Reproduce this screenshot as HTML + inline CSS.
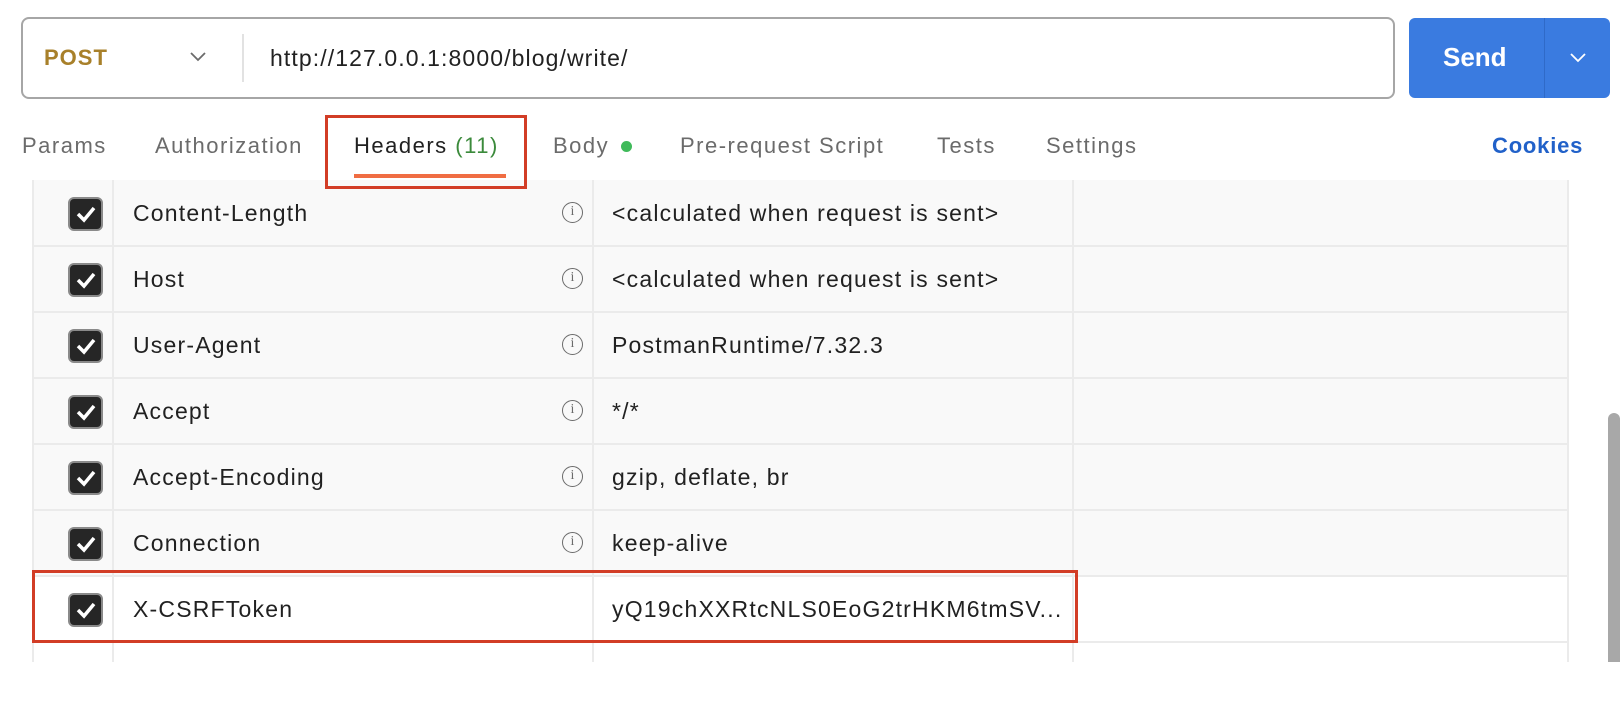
<!DOCTYPE html>
<html><head><meta charset="utf-8"><style>
*{margin:0;padding:0;box-sizing:border-box}
body{width:1620px;height:662px;background:#fff;font-family:"Liberation Sans",sans-serif;position:relative;overflow:hidden;color:#212121}
.a{position:absolute}
.url{left:21px;top:17px;width:1374px;height:82px;border:2px solid #a6a6a6;border-radius:8px;background:#fff}
.tab{top:133px;font-size:22px;color:#6b6b6b;white-space:nowrap;letter-spacing:1.5px}
.row{left:32px;width:1536px;height:66px;background:#f9f9f9;border-bottom:2px solid #ebebeb}
.cb{left:68px;width:35px;height:34px;background:#262626;border:2px solid #8a8a8a;border-radius:6px}
.cb svg{position:absolute;left:6px;top:6px}
.t{font-size:23px;color:#212121;white-space:nowrap;letter-spacing:1.2px}
.vl{width:2px;background:#ebebeb;top:180px;height:482px}
.info{width:21px;height:21px;border:1.6px solid #6b6b6b;border-radius:50%;font-size:14px;color:#6b6b6b;text-align:center;line-height:18px;font-family:"Liberation Serif",serif}
</style></head><body>
<div class="a url"></div>
<div class="a" style="left:44px;top:45px;font-size:22px;font-weight:bold;color:#a8802a;letter-spacing:1px">POST</div>
<svg class="a" style="left:189px;top:51px" width="18" height="12"><path d="M2 2 L9 9 L16 2" stroke="#6b6b6b" stroke-width="1.8" fill="none"/></svg>
<div class="a" style="left:242px;top:34px;width:2px;height:48px;background:#e2e2e2"></div>
<div class="a" style="left:270px;top:45px;font-size:23px;color:#212121;letter-spacing:1.1px">http://127.0.0.1:8000/blog/write/</div>
<div class="a" style="left:1409px;top:18px;width:201px;height:80px;background:#3a7be0;border-radius:6px"></div>
<div class="a" style="left:1544px;top:18px;width:1px;height:80px;background:#2f6ac8"></div>
<div class="a" style="left:1443px;top:42px;font-size:26px;font-weight:bold;color:#fff">Send</div>
<svg class="a" style="left:1569px;top:52px" width="18" height="12"><path d="M2 2 L9 9 L16 2" stroke="#fff" stroke-width="1.8" fill="none"/></svg>
<div class="a tab" style="left:22px">Params</div>
<div class="a tab" style="left:155px">Authorization</div>
<div class="a tab" style="left:354px;color:#212121">Headers <span style="color:#3b8a3b">(11)</span></div>
<div class="a tab" style="left:553px">Body</div>
<div class="a" style="left:621px;top:141px;width:11px;height:11px;border-radius:50%;background:#3fba5a"></div>
<div class="a tab" style="left:680px">Pre-request Script</div>
<div class="a tab" style="left:937px">Tests</div>
<div class="a tab" style="left:1046px">Settings</div>
<div class="a tab" style="left:1492px;color:#2161c9;font-weight:bold;letter-spacing:0.8px">Cookies</div>
<div class="a" style="left:354px;top:174px;width:152px;height:4px;background:#f06d43"></div>

<div class="a row" style="top:180px;height:67px"></div>
<div class="a row" style="top:247px"></div>
<div class="a row" style="top:313px"></div>
<div class="a row" style="top:379px"></div>
<div class="a row" style="top:445px"></div>
<div class="a row" style="top:511px"></div>
<div class="a row" style="top:577px;background:#fff"></div>
<div class="a row" style="top:643px;background:#fff;border:none"></div>
<div class="a vl" style="left:32px"></div>
<div class="a vl" style="left:112px"></div>
<div class="a vl" style="left:592px"></div>
<div class="a vl" style="left:1072px"></div>
<div class="a vl" style="left:1567px"></div>
<div class="a" style="left:1608px;top:413px;width:12px;height:249px;background:#a8a8a8;border-radius:6px 6px 0 0"></div>

<div class="a cb" style="top:197px"><svg width="20" height="18"><path d="M2 9 L8 15 L18 3" stroke="#fff" stroke-width="3.5" fill="none"/></svg></div>
<div class="a cb" style="top:263px"><svg width="20" height="18"><path d="M2 9 L8 15 L18 3" stroke="#fff" stroke-width="3.5" fill="none"/></svg></div>
<div class="a cb" style="top:329px"><svg width="20" height="18"><path d="M2 9 L8 15 L18 3" stroke="#fff" stroke-width="3.5" fill="none"/></svg></div>
<div class="a cb" style="top:395px"><svg width="20" height="18"><path d="M2 9 L8 15 L18 3" stroke="#fff" stroke-width="3.5" fill="none"/></svg></div>
<div class="a cb" style="top:461px"><svg width="20" height="18"><path d="M2 9 L8 15 L18 3" stroke="#fff" stroke-width="3.5" fill="none"/></svg></div>
<div class="a cb" style="top:527px"><svg width="20" height="18"><path d="M2 9 L8 15 L18 3" stroke="#fff" stroke-width="3.5" fill="none"/></svg></div>
<div class="a cb" style="top:593px"><svg width="20" height="18"><path d="M2 9 L8 15 L18 3" stroke="#fff" stroke-width="3.5" fill="none"/></svg></div>

<div class="a t" style="left:133px;top:200px">Content-Length</div>
<div class="a t" style="left:133px;top:266px">Host</div>
<div class="a t" style="left:133px;top:332px">User-Agent</div>
<div class="a t" style="left:133px;top:398px">Accept</div>
<div class="a t" style="left:133px;top:464px">Accept-Encoding</div>
<div class="a t" style="left:133px;top:530px">Connection</div>
<div class="a t" style="left:133px;top:596px">X-CSRFToken</div>

<div class="a info" style="left:562px;top:202px">i</div>
<div class="a info" style="left:562px;top:268px">i</div>
<div class="a info" style="left:562px;top:334px">i</div>
<div class="a info" style="left:562px;top:400px">i</div>
<div class="a info" style="left:562px;top:466px">i</div>
<div class="a info" style="left:562px;top:532px">i</div>

<div class="a t" style="left:612px;top:200px">&lt;calculated when request is sent&gt;</div>
<div class="a t" style="left:612px;top:266px">&lt;calculated when request is sent&gt;</div>
<div class="a t" style="left:612px;top:332px">PostmanRuntime/7.32.3</div>
<div class="a t" style="left:612px;top:398px">*/*</div>
<div class="a t" style="left:612px;top:464px">gzip, deflate, br</div>
<div class="a t" style="left:612px;top:530px">keep-alive</div>
<div class="a t" style="left:612px;top:596px">yQ19chXXRtcNLS0EoG2trHKM6tmSV...</div>

<div class="a" style="left:325px;top:115px;width:202px;height:74px;border:3px solid #d23d26"></div>
<div class="a" style="left:32px;top:570px;width:1046px;height:73px;border:3px solid #d23d26"></div>
</body></html>
